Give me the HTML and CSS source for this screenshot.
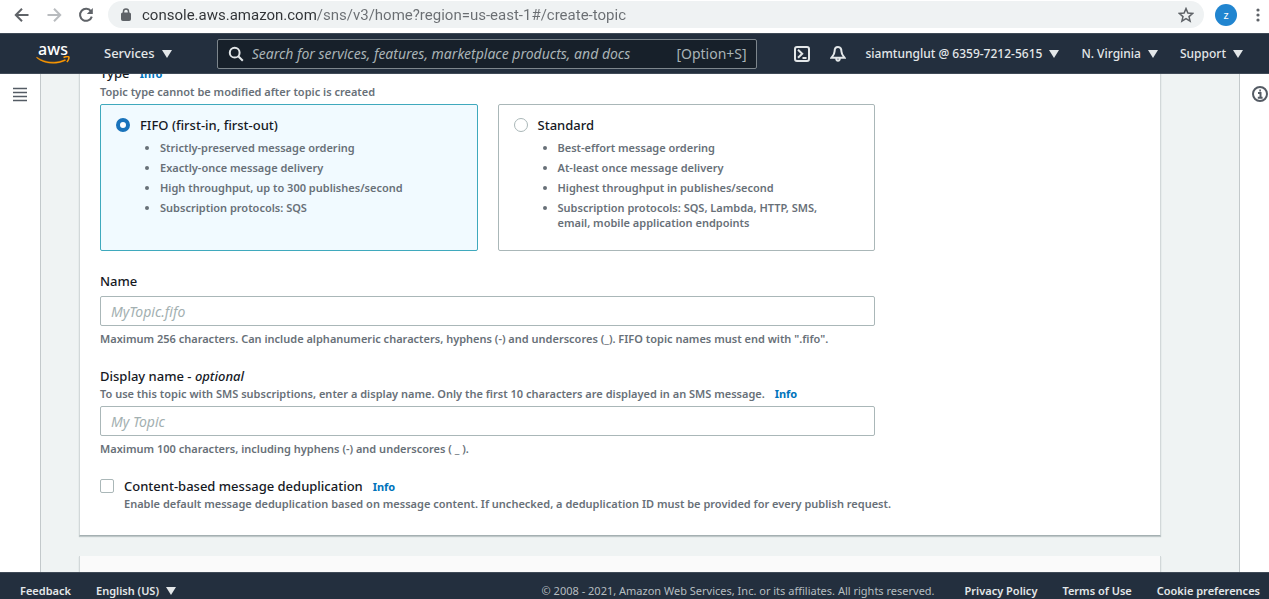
FILE: index.html
```html
<!DOCTYPE html>
<html lang="en">
<head>
    <meta charset="UTF-8">
    <meta name="viewport" content="width=device-width, initial-scale=1.0">
    <title>Create topic - Amazon SNS</title>
    <link rel="stylesheet" href="styles.css">
</head>
<body>

<!-- Browser toolbar -->
<div class="toolbar">
    <button class="tool" aria-label="Back">
        <svg width="16" height="16" viewBox="0 0 16 16"><path d="M14.5 8H2M8 1.8L1.8 8L8 14.2"/></svg>
    </button>
    <button class="tool tool-disabled" aria-label="Forward">
        <svg width="16" height="16" viewBox="0 0 16 16"><path d="M1.5 8H14M8 1.8L14.2 8L8 14.2"/></svg>
    </button>
    <button class="tool" aria-label="Reload">
        <svg width="16" height="16" viewBox="0 0 16 16"><path d="M13 4.4A6 6 0 1 0 13.8 9.6"/><path class="fill" d="M14.8 1V7H8.8Z"/></svg>
    </button>
    <div class="address">
        <svg class="lock" width="10" height="13" viewBox="0 0 10 13"><rect x="0.5" y="5" width="9" height="7.5" rx="1"/><path d="M2.5 5.5V3.4a2.5 2.5 0 0 1 5 0V5.5"/></svg>
        <input class="url" type="text" aria-label="Address" value="console.aws.amazon.com/sns/v3/home?region=us-east-1#/create-topic">
        <button class="tool" aria-label="Bookmark">
            <svg class="star" width="16" height="16" viewBox="0 0 16 16"><path d="M8 1.6L9.9 6.1L14.6 6.5L11 9.6L12.1 14.2L8 11.7L3.9 14.2L5 9.6L1.4 6.5L6.1 6.1Z"/></svg>
        </button>
    </div>
    <div class="toolbar-end">
        <button class="avatar">z</button>
        <button class="tool" aria-label="Menu">
            <svg class="dots" width="16" height="16" viewBox="0 0 16 16"><circle cx="8" cy="3" r="1.6"/><circle cx="8" cy="8" r="1.6"/><circle cx="8" cy="13" r="1.6"/></svg>
        </button>
    </div>
</div>

<!-- AWS navigation -->
<header class="nav">
    <a class="logo" href="#" aria-label="aws">
        <span class="logo-text">aws</span>
        <svg width="34" height="9" viewBox="0 0 34 9"><path class="smile" d="M0.8 1.2C9 7 20.5 7.6 29.2 3.6L29.6 4.4C20 9 8 8 0.5 1.7Z"/><path class="tip" d="M27.5 1.5C30 0.5 32.5 0.5 32.9 1C33.2 1.7 32.5 4.4 30.8 6"/></svg>
    </a>
    <button class="nav-button services">Services <span class="caret"></span></button>
    <div class="search">
        <svg width="16" height="16" viewBox="0 0 16 16"><circle cx="6.7" cy="6.7" r="4.9"/><path d="M10.3 10.3L14.8 14.8"/></svg>
        <input class="search-input" type="text" aria-label="Search" placeholder="Search for services, features, marketplace products, and docs">
        <span class="shortcut">[Option+S]</span>
    </div>
    <div class="nav-right">
        <button class="nav-button" aria-label="CloudShell">
            <svg class="nav-icon" width="16" height="16" viewBox="0 0 16 16"><rect x="1" y="1" width="14" height="14" rx="2"/><path d="M4 3.8L8.2 7.8L4 11.8M8.5 12H12.5"/></svg>
        </button>
        <button class="nav-button" aria-label="Notifications">
            <svg class="nav-icon" width="16" height="16" viewBox="0 0 16 16"><path d="M8 1C5.3 1 4.6 3.2 4.6 5.3C4.6 8.2 3 9.7 1.4 11.8H14.6C13 9.7 11.4 8.2 11.4 5.3C11.4 3.2 10.7 1 8 1ZM6.2 12.3C6.2 15.6 9.8 15.6 9.8 12.3"/></svg>
        </button>
        <button class="nav-button">siamtunglut @ 6359-7212-5615 <span class="caret"></span></button>
        <button class="nav-button">N. Virginia <span class="caret"></span></button>
        <button class="nav-button">Support <span class="caret"></span></button>
    </div>
</header>

<div class="layout">
    <aside class="side side-left">
        <button class="side-button" aria-label="Open navigation">
            <svg width="16" height="16" viewBox="0 0 16 16"><path d="M1 2.5H15M1 6.5H15M1 10.5H15M1 14.5H15"/></svg>
        </button>
    </aside>

    <main class="content">
        <form class="panel">
            <fieldset class="field">
                <legend class="label">Type <a class="info" href="#">Info</a></legend>
                <p class="hint">Topic type cannot be modified after topic is created</p>
                <div class="tiles">
                    <div class="tile tile-selected">
                        <label class="tile-title"><input class="radio" type="radio" name="type" checked> FIFO (first-in, first-out)</label>
                        <ul class="tile-list">
                            <li>Strictly-preserved message ordering</li>
                            <li>Exactly-once message delivery</li>
                            <li>High throughput, up to 300 publishes/second</li>
                            <li>Subscription protocols: SQS</li>
                        </ul>
                    </div>
                    <div class="tile">
                        <label class="tile-title"><input class="radio" type="radio" name="type"> Standard</label>
                        <ul class="tile-list">
                            <li>Best-effort message ordering</li>
                            <li>At-least once message delivery</li>
                            <li>Highest throughput in publishes/second</li>
                            <li>Subscription protocols: SQS, Lambda, HTTP, SMS, email, mobile application endpoints</li>
                        </ul>
                    </div>
                </div>
            </fieldset>

            <div class="field">
                <label class="label label-name" for="name">Name</label>
                <input class="text-input" id="name" type="text" placeholder="MyTopic.fifo">
                <p class="hint hint-below">Maximum 256 characters. Can include alphanumeric characters, hyphens (-) and underscores (_). FIFO topic names must end with ".fifo".</p>
            </div>

            <div class="field">
                <label class="label" for="display-name">Display name - <em>optional</em></label>
                <p class="hint">To use this topic with SMS subscriptions, enter a display name. Only the first 10 characters are displayed in an SMS message. <a class="info" href="#">Info</a></p>
                <input class="text-input" id="display-name" type="text" placeholder="My Topic">
                <p class="hint hint-below">Maximum 100 characters, including hyphens (-) and underscores ( _ ).</p>
            </div>

            <div class="check-field">
                <input class="checkbox" id="dedup" type="checkbox">
                <div>
                    <label class="label" for="dedup">Content-based message deduplication</label>
                    <a class="info" href="#">Info</a>
                    <p class="hint">Enable default message deduplication based on message content. If unchecked, a deduplication ID must be provided for every publish request.</p>
                </div>
            </div>
        </form>
        <section class="panel panel-next"></section>
    </main>

    <aside class="side side-right">
        <button class="side-button" aria-label="Open help">
            <svg width="16" height="16" viewBox="0 0 16 16"><circle cx="8" cy="8" r="7"/><path d="M6 7H8.5V11.5M5.8 11.7H10.6M7.3 4.5H8.9"/></svg>
        </button>
    </aside>
</div>

<footer class="footer">
    <button class="nav-button">Feedback</button>
    <button class="nav-button">English (US) <span class="caret"></span></button>
    <p class="copyright">© 2008 - 2021, Amazon Web Services, Inc. or its affiliates. All rights reserved.</p>
    <a href="#">Privacy Policy</a>
    <a href="#">Terms of Use</a>
    <a href="#">Cookie preferences</a>
</footer>

</body>
</html>
```

FILE: styles.css
```css
* {
    box-sizing: border-box;
}

body {
    margin: 0;
    height: 100vh;
    display: flex;
    flex-direction: column;
    overflow: hidden;
    font-family: "Noto Sans", "Open Sans", sans-serif;
    font-size: 11px;
    line-height: 15px;
    color: #16191f;
    background-color: #fff;
}

button,
input {
    font-family: inherit;
    margin: 0;
}

button {
    border: none;
    padding: 0;
    background: none;
    cursor: pointer;
}

svg {
    display: block;
    fill: none;
    stroke: currentColor;
}

p {
    margin: 0;
}

a {
    text-decoration: none;
}

/* Browser toolbar */
.toolbar {
    display: flex;
    align-items: center;
    gap: 16px;
    padding: 1px 3px 5px 14px;
    background-color: #fff;
}

.tool {
    color: #5f6368;
}

.tool svg {
    stroke-width: 2;
}

.tool-disabled {
    color: #b9bcbf;
}

.tool .fill,
.tool .dots {
    fill: currentColor;
    stroke: none;
}

.tool .star {
    stroke-width: 1.5;
}

.toolbar-end {
    display: flex;
    align-items: center;
    gap: 13px;
}

.address {
    flex: 1;
    display: flex;
    align-items: center;
    height: 27px;
    margin: 0 -5px 0 -2px;
    padding: 0 10px 0 13px;
    border-radius: 14px;
    background-color: #eff2f3;
}

.lock {
    fill: #5f6368;
    color: #5f6368;
}

.lock path {
    fill: none;
    stroke-width: 1.5;
}

/* The domain is darker than the rest of the address */
.url {
    flex: 1;
    margin-left: 11px;
    padding: 0;
    border: none;
    outline: none;
    font-family: Roboto, sans-serif;
    font-size: 15px;
    background: linear-gradient(90deg, #303336 174px, #6a6e72 174px);
    -webkit-background-clip: text;
    background-clip: text;
    -webkit-text-fill-color: transparent;
}

.avatar {
    width: 22px;
    height: 22px;
    border-radius: 50%;
    background-color: #2185d0;
    color: #fff;
    font-size: 11px;
    line-height: 22px;
}

/* AWS navigation */
.nav {
    display: flex;
    align-items: center;
    height: 41px;
    padding: 0 26px 0 36px;
    background-color: #232f3e;
    border-top: 1px solid #3f4a57;
    border-bottom: 1px solid #3f4a57;
    flex-shrink: 0;
    position: relative;
}

.logo {
    width: 34px;
    color: #fff;
}

.logo-text {
    display: block;
    font-size: 16px;
    font-weight: 500;
    line-height: 14px;
    text-align: center;
}

.smile {
    fill: #f90;
    stroke: #f90;
    stroke-width: 0.5;
}

.tip {
    stroke: #f90;
    stroke-width: 1.5;
}

.nav-button {
    display: flex;
    align-items: center;
    gap: 7px;
    color: #e3e7e9;
    font-size: 11px;
    font-weight: 600;
    line-height: 15px;
    white-space: nowrap;
}

.services {
    margin-left: 34px;
    font-size: 13px;
    font-weight: 500;
}

.caret {
    border-left: 5px solid transparent;
    border-right: 5px solid transparent;
    border-top: 8px solid currentColor;
}

.search {
    flex: 0 1 540px;
    display: flex;
    align-items: center;
    height: 30px;
    margin-left: 45px;
    padding: 0 9px;
    border: 1px solid #7d868c;
    border-radius: 2px;
    background-color: #17202a;
    color: #e3e7e9;
}

.search svg {
    stroke-width: 2;
    margin-left: 1px;
}

.search-input {
    flex: 1;
    min-width: 0;
    margin-left: 8px;
    padding: 0;
    border: none;
    outline: none;
    background: none;
    color: #fff;
    font-size: 14px;
}

.search-input::placeholder {
    color: #a9b3b6;
    font-style: italic;
}

.shortcut {
    color: #a9b3b6;
    font-size: 14px;
}

.nav-right {
    margin-left: auto;
    display: flex;
    align-items: center;
    gap: 22px;
}

.nav-right .nav-button {
    font-size: 12px;
    font-weight: 500;
}

.nav-icon {
    stroke-width: 2;
    margin-right: -2px;
}

/* Page */
.layout {
    flex: 1;
    min-height: 0;
    display: flex;
    overflow: hidden;
    background-color: #eff3f3;
}

.side {
    padding-top: 12px;
    background-color: #fff;
    flex-shrink: 0;
}

.side-button {
    color: #545b64;
}

.side-left {
    width: 41px;
    padding-left: 12px;
    border-right: 1px solid #c3c9cb;
}

.side-left svg {
    stroke-width: 1.5;
}

.side-right {
    width: 30px;
    padding-left: 12px;
    border-left: 1px solid #c3c9cb;
}

.side-right svg {
    stroke-width: 2;
}

/* Scrolled so that the type label is partly under the navigation */
.content {
    flex: 1;
    margin-top: -23px;
    padding: 0 78px 0 38px;
}

.panel {
    padding: 12px 20px 24px;
    border: 1px solid #d2d8d9;
    border-top: none;
    border-bottom-color: #a5b0b2;
    background-color: #fff;
    box-shadow: 0 1px 1px rgba(0, 28, 36, 0.2);
}

.panel-next {
    margin-top: 20px;
    height: 60px;
    background-color: #fafafa;
}

.field {
    max-width: 775px;
    margin: 0 0 20px;
    padding: 0;
    border: none;
}

.label {
    padding: 0;
    font-size: 13px;
    line-height: 20px;
    font-weight: 500;
}

.info {
    margin-left: 7px;
    color: #0073bb;
    font-size: 11px;
    font-weight: 700;
}

.hint {
    color: #687078;
    font-size: 11px;
    font-weight: 600;
    line-height: 15px;
    white-space: nowrap;
}

.hint-below {
    margin-top: 5px;
}

.tiles {
    display: grid;
    grid-template-columns: 1fr 1fr;
    gap: 20px;
    margin-top: 5px;
}

.tile {
    padding: 10px 32px 20px 15px;
    border: 1px solid #aab7b8;
    border-radius: 2px;
}

.tile-selected {
    border-color: #3fa9bd;
    background-color: #f1faff;
}

.tile-title {
    display: flex;
    align-items: center;
    gap: 10px;
    font-size: 13px;
    font-weight: 500;
    line-height: 20px;
}

.radio,
.checkbox {
    appearance: none;
    flex-shrink: 0;
    width: 14px;
    height: 14px;
    border: 1px solid #aab7b8;
    background-color: #fff;
}

.radio {
    border-radius: 50%;
}

.radio:checked {
    border: 4px solid #1a73bb;
}

.checkbox {
    margin-top: 3px;
    border-radius: 2px;
}

.tile-list {
    margin: 5px 0 0;
    padding-left: 44px;
    color: #687078;
    font-weight: 600;
}

.tile-list li + li {
    margin-top: 5px;
}

.label-name {
    display: block;
    margin-bottom: 5px;
}

.text-input {
    display: block;
    width: 100%;
    height: 30px;
    padding: 0 10px;
    border: 1px solid #aab7b8;
    border-radius: 2px;
    font-size: 14px;
}

.hint + .text-input {
    margin-top: 5px;
}

.text-input::placeholder {
    color: #a3b0b1;
    font-style: italic;
}

.check-field {
    display: flex;
    gap: 10px;
}

/* Footer */
.footer {
    display: flex;
    align-items: center;
    gap: 25px;
    height: 27px;
    padding: 9px 9px 0 20px;
    border-top: 1px solid #3f4a57;
    background-color: #232f3e;
    flex-shrink: 0;
}

.footer a {
    color: #e3e7e9;
    font-weight: 600;
}

.copyright {
    margin-left: auto;
    margin-right: 5px;
    color: #b5bdc0;
    font-weight: 400;
}
```
